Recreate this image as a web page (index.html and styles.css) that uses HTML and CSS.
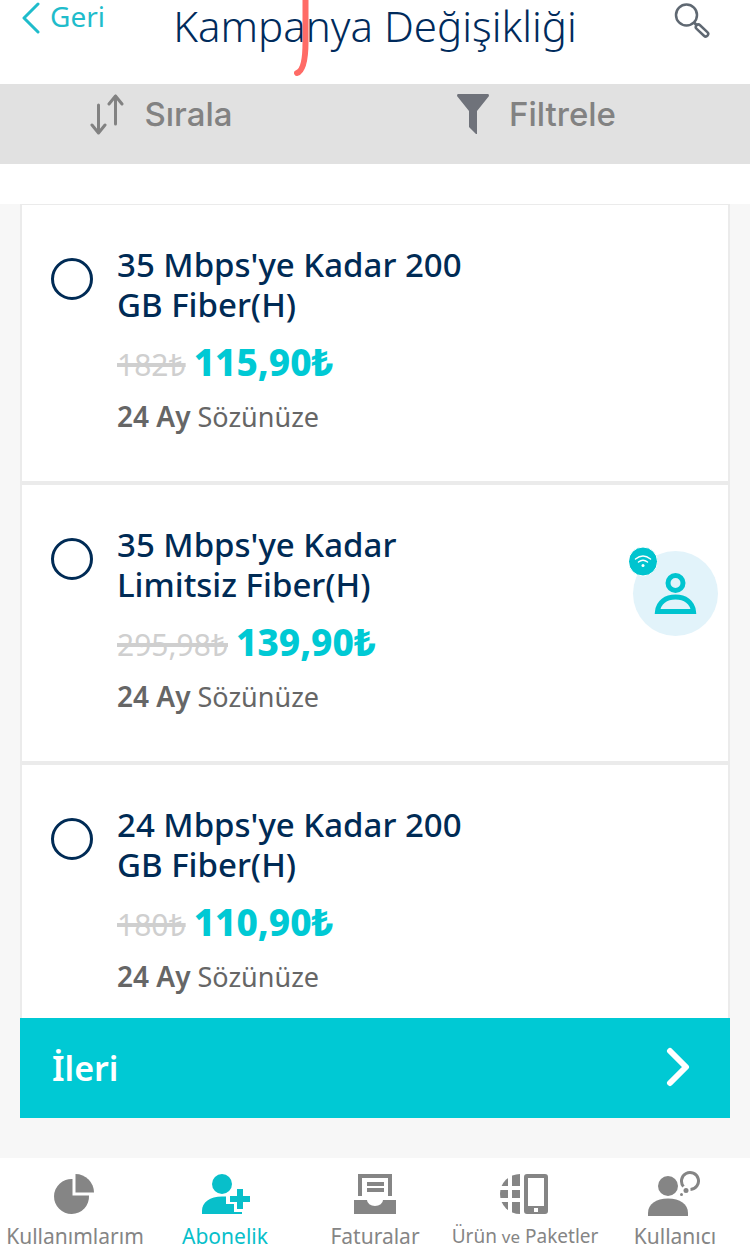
FILE: index.html
```html
<!DOCTYPE html>
<html lang="tr">
<head>
  <meta charset="UTF-8">
  <meta name="viewport" content="width=device-width, initial-scale=1.0">
  <title>Kampanya Değişikliği</title>
  <link rel="stylesheet" href="styles.css">
</head>
<body>
  <header class="header">
    <a class="back" href="#">
      <svg width="18" height="34" viewBox="0 0 18 34" fill="none" stroke="currentColor" stroke-width="3" stroke-linecap="round" stroke-linejoin="round"><path d="M16 4 2 18l14 14"/></svg>
      Geri
    </a>
    <h1>Kampanya Değişikliği</h1>
    <button class="search" type="button" aria-label="Ara">
      <svg width="36" height="36" viewBox="0 0 36 36" fill="none" stroke="currentColor">
        <circle cx="12.500" cy="12" r="10.500" stroke-width="2.500"/>
        <path d="M20 19.500l3 3" stroke-width="3"/>
        <rect x="20.500" y="25" width="15" height="5" rx="2.500" stroke-width="2.500" transform="rotate(43 28 27.500)"/>
      </svg>
    </button>
    <svg class="mark" width="20" height="80" viewBox="0 0 20 80" fill="none"><path d="M14.500-4V42C14.500 60 12 71 6 73" stroke="#ff6b66" stroke-width="6" stroke-linecap="round"/></svg>
  </header>

  <div class="toolbar">
    <button type="button">
      <svg width="34" height="42" viewBox="0 0 34 42" fill="none" stroke="currentColor" stroke-width="3" stroke-linecap="round" stroke-linejoin="round"><path d="M8.500 12v27M2 32l6.500 8 6.500-8M25.500 31V3M19 11l6.500-8 6.500 8"/></svg>
      Sırala
    </button>
    <button type="button">
      <svg width="32" height="42" viewBox="0 0 32 42" fill="#6f727a"><path d="M1 1h30q1 0 1 2L20 18v23h-1l-7-7V18L0 3Q0 1 1 1z"/></svg>
      Filtrele
    </button>
  </div>

  <main class="content">
    <div class="list">
      <label class="offer">
        <input type="radio" name="offer">
        <span class="info">
          <span class="name">35 Mbps'ye Kadar 200 GB Fiber(H)</span>
          <span class="price"><del>182₺</del><strong>115,90₺</strong></span>
          <span class="term"><b>24 Ay</b> Sözünüze</span>
        </span>
      </label>
      <label class="offer">
        <input type="radio" name="offer">
        <span class="info">
          <span class="name">35 Mbps'ye Kadar Limitsiz Fiber(H)</span>
          <span class="price"><del>295,98₺</del><strong>139,90₺</strong></span>
          <span class="term"><b>24 Ay</b> Sözünüze</span>
        </span>
        <svg class="badge" width="89" height="89" viewBox="0 0 89 89" fill="none" stroke="#00c4cf">
          <circle cx="46.500" cy="46.500" r="42.500" fill="#e2f3fa" stroke="none"/>
          <circle cx="46.500" cy="36" r="7.500" stroke-width="5"/>
          <path d="M28.500 64.500C29.500 55 37 50 46.500 50S63.500 55 64.500 64.500z" stroke-width="5"/>
          <circle cx="14" cy="14.500" r="14.500" fill="#00c4cf" stroke="#fff" stroke-width="1"/>
          <g stroke="#fff" stroke-width="1.500" stroke-linecap="round">
            <path d="M6.500 12q7.500-6 15 0M9.500 15q4.500-3.500 9 0"/>
            <circle cx="14" cy="18.500" r="1.500" fill="#fff" stroke="none"/>
          </g>
        </svg>
      </label>
      <label class="offer">
        <input type="radio" name="offer">
        <span class="info">
          <span class="name">24 Mbps'ye Kadar 200 GB Fiber(H)</span>
          <span class="price"><del>180₺</del><strong>110,90₺</strong></span>
          <span class="term"><b>24 Ay</b> Sözünüze</span>
        </span>
      </label>
    </div>
    <button class="next" type="button">
      İleri
      <svg width="24" height="42" viewBox="0 0 24 42" fill="none" stroke="currentColor" stroke-width="6" stroke-linecap="round" stroke-linejoin="round"><path d="M4 4l16 16L4 36"/></svg>
    </button>
  </main>

  <nav class="tabs">
    <a href="#">
      <svg width="56" height="48" viewBox="0 0 56 48" fill="currentColor">
        <path d="M25.500 9V25.500H42A17.500 17.500 0 1 1 25.500 9z"/>
        <path d="M28.500 4A18.500 18.500 0 0 1 47 22.500H28.500z"/>
      </svg>
      Kullanımlarım
    </a>
    <a class="active" href="#">
      <svg width="56" height="48" viewBox="0 0 56 48" fill="currentColor">
        <circle cx="25" cy="14" r="10"/>
        <path d="M5 44V41C5 32 13 26.500 25 26.500H29V34H37V42H45V44z"/>
        <path d="M40 19h6v7h7v6h-7v7h-6v-7h-7v-6h7z"/>
      </svg>
      Abonelik
    </a>
    <a href="#">
      <svg width="56" height="48" viewBox="0 0 56 48" fill="currentColor">
        <path d="M11 4H45V26H41V8H15V26H11z"/>
        <path d="M20 12h17v4H20zM20 18h17v4H20z"/>
        <path d="M7 30H20A8 6 0 0 0 36 30H49V44H7z"/>
      </svg>
      Faturalar
    </a>
    <a href="#">
      <svg width="56" height="48" viewBox="0 0 56 48" fill="currentColor">
        <clipPath id="globe"><circle cx="23" cy="24" r="20"/></clipPath>
        <path clip-path="url(#globe)" d="M3 4h8v12H3zM15 4h8v12h-8zM3 20h8v8H3zM15 20h8v8h-8zM3 32h8v12H3zM15 32h8v12h-8z"/>
        <path fill-rule="evenodd" d="M30 4H48a3 3 0 0 1 3 3V41a3 3 0 0 1-3 3H30a3 3 0 0 1-3-3V7a3 3 0 0 1 3-3zM31 8V36H47V8zM37 38v4h4v-4z"/>
      </svg>
      <span class="long">Ürün <small>ve</small> Paketler</span>
    </a>
    <a href="#">
      <svg width="56" height="48" viewBox="0 0 56 48" fill="currentColor">
        <circle cx="21" cy="16" r="10"/>
        <path d="M1 46V43C1 34 9 28.500 21 28.500S41 34 41 43V46z"/>
        <path d="M36.500 16.500A8.500 8.500 0 1 1 43.500 19.500" fill="none" stroke="currentColor" stroke-width="3"/>
        <circle cx="39" cy="20.500" r="2.500"/>
        <circle cx="34.500" cy="24.500" r="1.500"/>
      </svg>
      Kullanıcı
    </a>
  </nav>
</body>
</html>
```

FILE: styles.css
```css
* {
  box-sizing: border-box;
}
body {
  margin: 0;
  height: 100vh;
  display: flex;
  flex-direction: column;
  font-family: "Noto Sans", sans-serif;
  background-color: #fff;
}
button {
  border: none;
  background: none;
  padding: 0;
  font-family: inherit;
  cursor: pointer;
}
a {
  text-decoration: none;
}
svg {
  flex-shrink: 0;
}

/* Header */
.header {
  position: relative;
  display: grid;
  grid-template-columns: 1fr auto 1fr;
  align-items: start;
  padding: 0 22px 32px;
}
.back {
  display: flex;
  gap: 10px;
  font-size: 28px;
  line-height: 32px;
  color: #1fbccb;
}
h1 {
  margin: 0;
  font-size: 42px;
  line-height: 52px;
  font-weight: 300;
  color: #002b5c;
}
.search {
  justify-self: end;
  margin-right: 18px;
  padding-top: 3px;
  color: #5f6872;
}
.mark {
  position: absolute;
  top: 0;
  left: 291px;
}

/* Sort and filter */
.toolbar {
  display: grid;
  grid-template-columns: 1fr 1fr;
  padding-bottom: 20px;
  background-color: #e1e1e1;
}
.toolbar button {
  display: flex;
  align-items: center;
  justify-content: center;
  gap: 20px;
  padding-right: 52px;
  font-family: Inter, sans-serif;
  font-size: 33px;
  line-height: 60px;
  font-weight: 500;
  color: #828282;
}

/* Offers */
.content {
  flex: 1;
  min-height: 0;
  display: flex;
  flex-direction: column;
  margin-top: 40px;
  padding: 0 20px 40px;
  background-color: #f7f7f7;
}
.list {
  flex: 1;
  min-height: 0;
  overflow: hidden;
}
.offer {
  display: flex;
  align-items: flex-start;
  gap: 24px;
  padding: 40px 10px 48px 29px;
  border: 2px solid #ebebeb;
  background-color: #fff;
}
.offer:first-child {
  border-top-width: 1px;
}
.offer input {
  appearance: none;
  flex-shrink: 0;
  width: 42px;
  height: 42px;
  margin: 13px 0 0;
  border: 3px solid #002b55;
  border-radius: 50%;
}
.offer input:checked {
  background-color: #00c9d4;
}
.info {
  max-width: 380px;
}
.name,
.price,
.term {
  display: block;
}
.name {
  font-size: 33px;
  line-height: 40px;
  font-weight: 500;
  color: #002b55;
}
.price {
  margin: 17px 0 10px;
  line-height: 40px;
}
.price del {
  margin-right: 8px;
  font-size: 30px;
  text-decoration-thickness: 4px;
  color: #cfcfcf;
}
.price strong {
  font-size: 37px;
  font-weight: 800;
  color: #00c9d4;
}
.term {
  font-size: 27px;
  line-height: 32px;
  color: #666;
}
.term b {
  font-size: 28px;
  font-weight: 600;
}
.badge {
  margin: 22px 0 0 auto;
}
.next {
  display: flex;
  align-items: center;
  justify-content: space-between;
  padding: 0 40px 0 32px;
  font-size: 34px;
  line-height: 100px;
  font-weight: 600;
  color: #fff;
  background-color: #00c9d4;
}

/* Bottom tabs */
.tabs {
  display: grid;
  grid-template-columns: repeat(5, minmax(0, 1fr));
  padding: 12px 0 8px;
}
.tabs a {
  display: flex;
  flex-direction: column;
  align-items: center;
  gap: 4px;
  font-size: 21px;
  line-height: 28px;
  white-space: nowrap;
  color: #858585;
}
.tabs .long {
  font-size: 19px;
}
.tabs small {
  font-size: 17px;
  line-height: 1;
}
.tabs .active {
  color: #08bfca;
}
```
